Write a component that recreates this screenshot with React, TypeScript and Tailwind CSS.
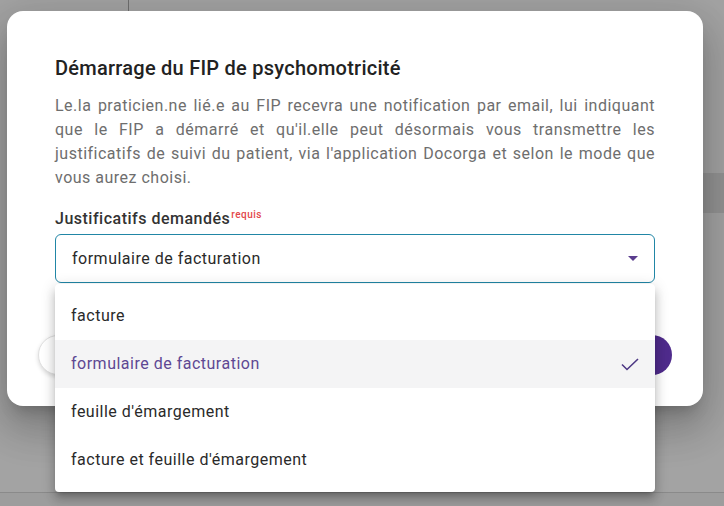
import React from 'react';

const options = [
  'facture',
  'formulaire de facturation',
  "feuille d'émargement",
  "facture et feuille d'émargement",
];

export default function App() {
  const selected = 'formulaire de facturation';

  return (
    <div
      className="relative w-[724px] h-[506px] overflow-hidden bg-[#a3a3a3]"
      style={{ fontFamily: 'Roboto, "Noto Sans", sans-serif' }}
    >
      {/* Page behind the overlay */}
      <div className="flex flex-col h-full">
        <div className="flex flex-1">
          <div className="w-[129px] border-r border-[#6f6f6f]" />
          <div className="flex-1 flex flex-col">
            <div className="h-[173px]" />
            <div className="h-[40px] bg-[#939393]" />
            <div className="flex-1" />
          </div>
        </div>
        <div className="h-[14px] border-t border-[#8a8a8a] bg-[#9d9d9d]" />
      </div>

      {/* Dialog */}
      <div className="absolute left-[7px] top-[11px] w-[696px] rounded-2xl bg-white pt-[45px] pb-[31px] flex flex-col shadow-[0_11px_15px_-7px_rgba(0,0,0,0.2),0_24px_38px_3px_rgba(0,0,0,0.14),0_9px_46px_8px_rgba(0,0,0,0.12)]">
        <div className="px-[48px] tracking-[0.5px]">
          <h2 className="text-[20px] leading-[24px] font-medium tracking-[0.25px] text-[#222]">
            Démarrage du FIP de psychomotricité
          </h2>
          <p className="mt-[14px] text-[16px] leading-[24px] text-[#6e6e6e] text-justify">
            Le.la praticien.ne lié.e au FIP recevra une notification par email, lui indiquant que le FIP a
            démarré et qu'il.elle peut désormais vous transmettre les justificatifs de suivi du patient, via
            l'application Docorga et selon le mode que vous aurez choisi.
          </p>

          <div className="mt-[18px] text-[16px] leading-[22px] font-medium text-[#333]">
            Justificatifs demandés
            <sup className="ml-[1px] text-[10px] font-medium text-[#e2474b] relative -top-[6px]">requis</sup>
          </div>

          <div className="relative mt-[4px]">
            <div className="flex items-center justify-between h-[49px] rounded-md border border-[#2186a6] pl-[16px] pr-[16px]">
              <span className="text-[16px] text-[#2a2a2a]">{selected}</span>
              <svg width="10" height="5" viewBox="0 0 10 5">
                <path d="M0 0 L10 0 L5 5 Z" fill="#5a3d8e" />
              </svg>
            </div>

            {/* Options menu */}
            <div className="absolute left-0 right-0 top-full z-10 mt-[1px] rounded-b rounded-t-sm bg-white py-2 shadow-[0_5px_5px_-3px_rgba(0,0,0,0.2),0_8px_10px_1px_rgba(0,0,0,0.14),0_3px_14px_2px_rgba(0,0,0,0.12)]">
              {options.map((o) => {
                const active = o === selected;
                return (
                  <div
                    key={o}
                    className={`flex items-center justify-between h-[48px] px-4 text-[16px] ${
                      active ? 'bg-[#f4f4f5] text-[#5e4893]' : 'text-[#2a2a2a]'
                    }`}
                  >
                    <span>{o}</span>
                    {active && (
                      <svg width="18" height="13" viewBox="0 0 18 13" fill="none">
                        <path d="M1 6.5 L6 11.5 L17 1" stroke="#4d3884" strokeWidth="1.6" />
                      </svg>
                    )}
                  </div>
                );
              })}
            </div>
          </div>
        </div>

        {/* Actions (hidden behind the menu) */}
        <div className="mt-[52px] px-[31px] flex items-center justify-between">
          <button
            aria-label="Annuler"
            className="h-[40px] w-[140px] rounded-full bg-white border border-[#e0e0e0] shadow-[0_2px_4px_rgba(0,0,0,0.15)]"
          />
          <button aria-label="Démarrer" className="h-[40px] w-[140px] rounded-full bg-[#4f2b8c]" />
        </div>
      </div>
    </div>
  );
}
